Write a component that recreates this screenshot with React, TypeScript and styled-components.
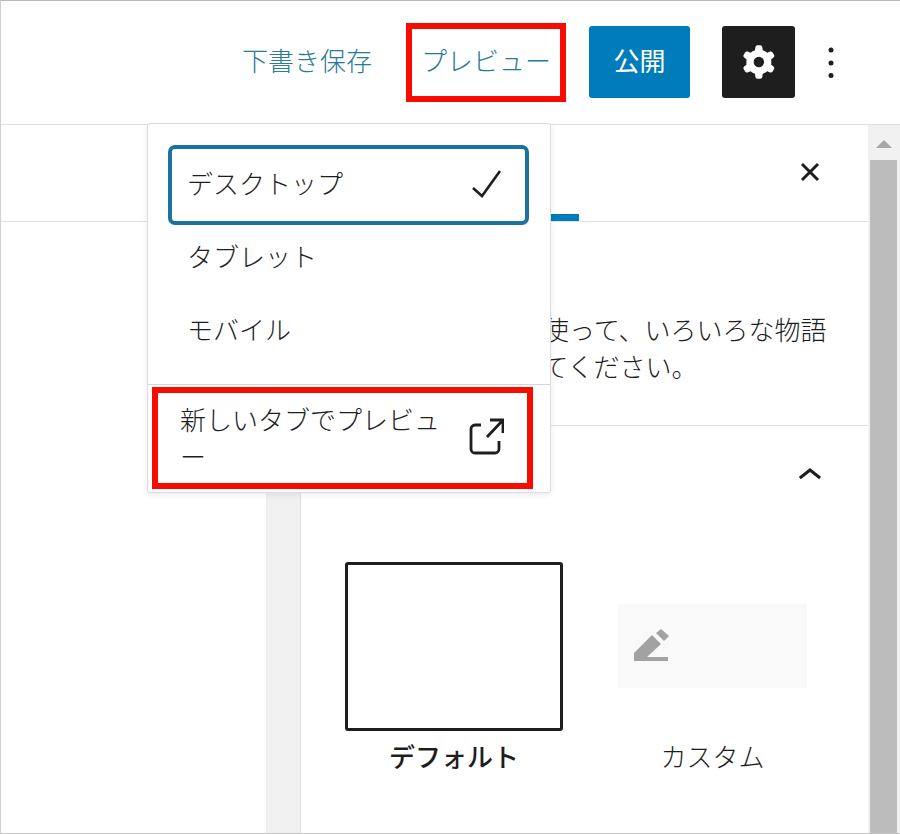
import styled, { createGlobalStyle } from 'styled-components'

const GlobalStyle = createGlobalStyle`
  html, body {
    margin: 0;
    padding: 0;
    background: #fff;
  }

  body {
    font-family: "Noto Sans CJK JP", "Noto Sans", sans-serif;
    font-weight: 300;
    font-size: 26px;
    line-height: 37px;
    color: #1e1e1e;
  }
`

const Frame = styled.div`
  position: relative;
  display: flex;
  flex-direction: column;
  box-sizing: border-box;
  width: 900px;
  height: 834px;
  overflow: hidden;
  border-top: 1px solid #b9b9b9;
  border-bottom: 1px solid #c4c4c4;
  border-left: 1px solid #cfcfcf;
`

const Header = styled.header`
  display: flex;
  flex: none;
  align-items: center;
  justify-content: flex-end;
  box-sizing: border-box;
  height: 124px;
  padding: 0 45px 2px 0;
  border-bottom: 1px solid #dedede;
`

const LinkButton = styled.span<{ $gap: number }>`
  margin: 0 ${(p) => p.$gap}px 4px 0;
  color: #2a7a9b;
  white-space: nowrap;
`

const PublishButton = styled.button`
  width: 101px;
  height: 72px;
  margin-right: 32px;
  padding: 0 0 5px;
  border: 0;
  border-radius: 3px;
  background: #007cba;
  color: #fff;
  font: inherit;
  font-weight: 400;
`

const SettingsButton = styled.button`
  display: flex;
  align-items: center;
  justify-content: center;
  width: 73px;
  height: 72px;
  margin-right: 12px;
  padding: 0;
  border: 0;
  border-radius: 3px;
  background: #1e1e1e;
  color: #fff;
`

const Icon = styled.svg`
  display: block;
  flex: none;
  fill: currentColor;
`

const CheckIcon = styled(Icon)`
  margin-top: 4px;
`

const ExternalIcon = styled(Icon)`
  margin-bottom: 2px;
`

const PencilIcon = styled(Icon)`
  margin-top: 3px;
`

const Body = styled.div`
  display: flex;
  flex: 1;
  min-height: 0;
`

const Content = styled.div`
  display: flex;
  flex: none;
  flex-direction: column;
  width: 299px;
`

const EditorBar = styled.div`
  flex: none;
  box-sizing: border-box;
  height: 97px;
  border-bottom: 1px solid #e2e2e2;
`

const EditorBelow = styled.div`
  display: flex;
  flex: 1;
`

const Canvas = styled.div`
  flex: 1;
`

const Gutter = styled.div`
  flex: none;
  width: 34px;
  background: #f0f0f0;
`

const Sidebar = styled.aside`
  flex: 1;
  min-width: 0;
  border-left: 1px solid #e0e0e0;
`

const TabBar = styled.div`
  display: flex;
  justify-content: space-between;
  box-sizing: border-box;
  height: 97px;
  padding-right: 34px;
  border-bottom: 1px solid #e2e2e2;
`

const ActiveTab = styled.div`
  box-sizing: border-box;
  width: 278px;
  height: 96px;
  border-bottom: 7px solid #007cba;
`

const CloseButton = styled.div`
  padding-top: 23px;
`

const Description = styled.p`
  box-sizing: border-box;
  height: 204px;
  margin: 0;
  padding: 88px 30px 0 34px;
  border-bottom: 1px solid #e2e2e2;
  white-space: nowrap;
`

const StylesSection = styled.section`
  padding: 26px 34px 0 44px;
`

const SectionHead = styled.div`
  display: flex;
  justify-content: flex-end;
  margin-bottom: 62px;
`

const StyleGrid = styled.div`
  display: grid;
  grid-template-columns: 218px 189px;
  column-gap: 55px;
`

const StyleOption = styled.div`
  display: flex;
  flex-direction: column;
  align-items: stretch;
`

const PreviewSlot = styled.div`
  display: flex;
  align-items: center;
  height: 169px;
`

const DefaultPreview = styled.div`
  box-sizing: border-box;
  width: 100%;
  height: 100%;
  border: 3px solid #1e1e1e;
  border-radius: 3px;
`

const CustomPreview = styled.div`
  display: flex;
  align-items: center;
  box-sizing: border-box;
  width: 100%;
  height: 84px;
  margin-bottom: 2px;
  padding-left: 6px;
  background: #f9f9f9;
  color: #a2a2a2;
`

const StyleLabel = styled.div<{ $active?: boolean }>`
  margin-top: 6px;
  text-align: center;
  font-weight: ${(p) => (p.$active ? 500 : 300)};
`

const Scrollbar = styled.div`
  display: flex;
  flex: none;
  flex-direction: column;
  align-items: center;
  box-sizing: border-box;
  width: 32px;
  padding-right: 1px;
  background: #f1f1f1;
`

const ScrollArrow = styled.div`
  flex: none;
  width: 0;
  height: 0;
  margin: 15px 0 12px;
  border-right: 8px solid transparent;
  border-bottom: 8px solid #a8a8a8;
  border-left: 8px solid transparent;
`

const ScrollThumb = styled.div`
  flex: 1;
  width: 27px;
  background: #bcbcbc;
`

const Popover = styled.div`
  position: absolute;
  top: 122px;
  left: 146px;
  box-sizing: border-box;
  width: 404px;
  height: 370px;
  border: 1px solid #dcdcdc;
  border-radius: 3px;
  background: #fff;
  box-shadow: 0 2px 6px rgba(0, 0, 0, 0.08);
`

const MenuGroup = styled.div`
  box-sizing: border-box;
  height: 261px;
  padding: 21px 21px 0 20px;
  border-bottom: 1px solid #d6d6d6;
`

const MenuItem = styled.div<{ $selected?: boolean }>`
  display: flex;
  align-items: center;
  justify-content: space-between;
  box-sizing: border-box;
  height: ${(p) => (p.$selected ? 80 : 73)}px;
  padding: ${(p) => (p.$selected ? '0 20px 6px 15px' : '0 20px 13px 15px')};
  border: 4px solid ${(p) => (p.$selected ? '#1a72a0' : 'transparent')};
  border-radius: 7px;
`

const NewTabItem = styled.div`
  display: flex;
  align-items: center;
  justify-content: space-between;
  padding: 15px 46px 15px 32px;
`

const NewTabLabel = styled.span`
  width: 270px;
`

const RedMark = styled.div`
  position: absolute;
  box-sizing: border-box;
  border: 6px solid #f60c00;
`

const PreviewMark = styled(RedMark)`
  top: 22px;
  left: 405px;
  width: 160px;
  height: 79px;
`

const NewTabMark = styled(RedMark)`
  top: 386px;
  left: 151px;
  width: 381px;
  height: 102px;
`

const App = () => (
  <>
    <GlobalStyle />
    <Frame>
      <Header>
        <LinkButton $gap={49}>下書き保存</LinkButton>
        <LinkButton $gap={38}>プレビュー</LinkButton>
        <PublishButton>公開</PublishButton>
        <SettingsButton>
          <Icon width="50" height="50" viewBox="0 0 24 24">
            <path
              fillRule="evenodd"
              clipRule="evenodd"
              d="M10.289 4.836A1 1 0 0111.275 4h1.306a1 1 0 01.987.836l.244 1.466c.787.26 1.503.679 2.108 1.218l1.393-.522a1 1 0 011.216.437l.653 1.13a1 1 0 01-.23 1.273l-1.148.944a6.025 6.025 0 010 2.435l1.149.946a1 1 0 01.23 1.272l-.653 1.13a1 1 0 01-1.216.437l-1.394-.522c-.605.54-1.32.958-2.108 1.218l-.244 1.466a1 1 0 01-.987.836h-1.306a1 1 0 01-.986-.836l-.244-1.466a5.995 5.995 0 01-2.108-1.218l-1.394.522a1 1 0 01-1.217-.436l-.653-1.131a1 1 0 01.23-1.272l1.149-.946a6.026 6.026 0 010-2.435l-1.148-.944a1 1 0 01-.23-1.272l.653-1.131a1 1 0 011.217-.437l1.393.522a5.994 5.994 0 012.108-1.218l.244-1.466zM14.429 12a2.5 2.5 0 11-5 0 2.5 2.5 0 015 0z"
            />
          </Icon>
        </SettingsButton>
        <Icon width="48" height="48" viewBox="0 0 48 48">
          <circle cx="24" cy="12" r="2.5" />
          <circle cx="24" cy="25" r="2.5" />
          <circle cx="24" cy="37.5" r="2.5" />
        </Icon>
      </Header>
      <Body>
        <Content>
          <EditorBar />
          <EditorBelow>
            <Canvas />
            <Gutter />
          </EditorBelow>
        </Content>
        <Sidebar>
          <TabBar>
            <ActiveTab />
            <CloseButton>
              <Icon width="48" height="48" viewBox="0 0 48 48">
                <path d="M16 16 L32 32 M32 16 L16 32" stroke="#1e1e1e" strokeWidth="3" fill="none" />
              </Icon>
            </CloseButton>
          </TabBar>
          <Description>
            テーマスタイルを使って、いろいろな物語
            <br />
            をぜひ作成してみてください。
          </Description>
          <StylesSection>
            <SectionHead>
              <Icon width="48" height="48" viewBox="0 0 24 24">
                <path d="M6.5 12.4L12 8l5.5 4.4-.9 1.2L12 10l-4.6 3.6-1-1.2z" />
              </Icon>
            </SectionHead>
            <StyleGrid>
              <StyleOption>
                <PreviewSlot>
                  <DefaultPreview />
                </PreviewSlot>
                <StyleLabel $active>デフォルト</StyleLabel>
              </StyleOption>
              <StyleOption>
                <PreviewSlot>
                  <CustomPreview>
                    <PencilIcon width="55" height="55" viewBox="0 0 55 55">
                      <path d="M32 13 L37 9 L45 16 L40 21Z M28 15 L37 24 L23 37 L44 37 L44 41 L10 41 L10 33Z" />
                    </PencilIcon>
                  </CustomPreview>
                </PreviewSlot>
                <StyleLabel>カスタム</StyleLabel>
              </StyleOption>
            </StyleGrid>
          </StylesSection>
        </Sidebar>
        <Scrollbar>
          <ScrollArrow />
          <ScrollThumb />
        </Scrollbar>
      </Body>
      <Popover>
        <MenuGroup>
          <MenuItem $selected>
            デスクトップ
            <CheckIcon width="36" height="36" viewBox="0 0 36 36">
              <path d="M4 22 L13 30 L31 5" stroke="#1e1e1e" strokeWidth="2.6" fill="none" />
            </CheckIcon>
          </MenuItem>
          <MenuItem>タブレット</MenuItem>
          <MenuItem>モバイル</MenuItem>
        </MenuGroup>
        <NewTabItem>
          <NewTabLabel>新しいタブでプレビュー</NewTabLabel>
          <ExternalIcon width="36" height="40" viewBox="0 0 36 40">
            <path
              d="M13 9 H7 a4 4 0 0 0 -4 4 V33 a4 4 0 0 0 4 4 H27 a4 4 0 0 0 4 -4 V25 M19 21 L35 4 M22 4 H35 V17"
              stroke="#1e1e1e"
              strokeWidth="2.8"
              fill="none"
            />
          </ExternalIcon>
        </NewTabItem>
      </Popover>
      <PreviewMark />
      <NewTabMark />
    </Frame>
  </>
)

export default App
